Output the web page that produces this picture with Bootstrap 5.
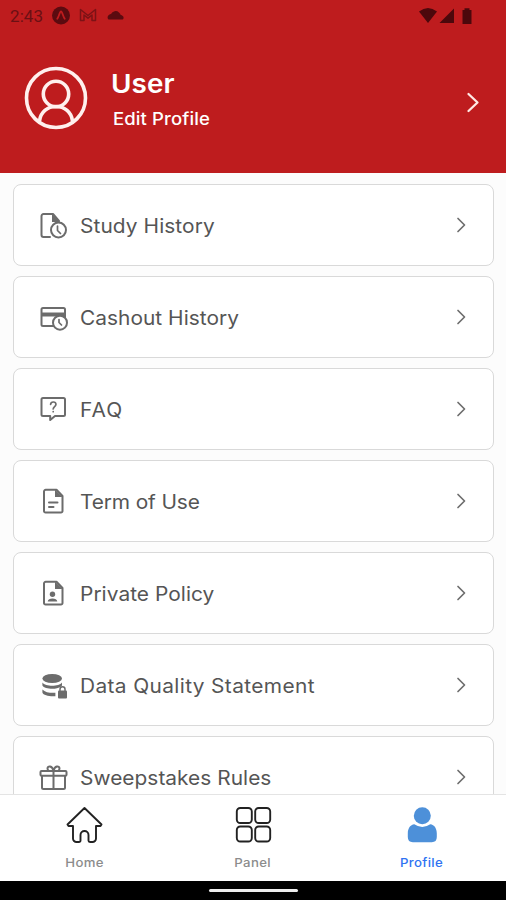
<!DOCTYPE html>
<html lang="en">
<head>
<meta charset="utf-8">
<meta name="viewport" content="width=device-width, initial-scale=1">
<title>Profile</title>
<link href="https://cdn.jsdelivr.net/npm/bootstrap@5.3.0/dist/css/bootstrap.min.css" rel="stylesheet">
<style>
body{font-family:Inter,"Open Sans",sans-serif;background:#fcfcfc;height:900px;color:#555}
svg{display:block;flex:none;fill:none;stroke-linecap:round;stroke-linejoin:round}
.hero{background:#be1c1e;height:173px}
.status{height:32px;padding:0 33px 0 10px;color:#6b1014}
.clock{font:400 17px/32px Roboto,sans-serif;width:34px;letter-spacing:.1px}
.user-row{padding:34px 26px 0 24px;height:130px}
.user-name{font-size:26px;line-height:32px;font-weight:600;letter-spacing:.1px;margin:2px 0 0 -1px;transform:scaleX(1.07);transform-origin:left}
.user-edit{font-size:17px;line-height:22px;font-weight:500;margin:8px 0 0 1px;letter-spacing:.1px;transform:scaleX(1.09);transform-origin:left}
.menu-list{padding:11px 12px 0 13px;gap:10px}
.menu-row{height:82px;flex:none;border:1.5px solid #d9d9d9;border-radius:8px;padding:0 25.5px 0 23.5px;font-size:19.5px;color:#555}
.menu-row svg{stroke:#6c6c6c;stroke-width:2}
.menu-row .solid{fill:#6c6c6c;stroke:none}
.menu-row .face{fill:#fff}
.menu-text{margin:3px 0 0 12px;white-space:nowrap;transform:scaleX(1.07);transform-origin:left}
.menu-row .arrow{stroke:#6e6e6e;stroke-width:1.7}
.tabs{height:87px;border-top:1.5px solid #e4e4e4;flex:none}
.tab-item{font-size:12px;font-weight:500;line-height:16px;color:#8c8c8c;padding-top:10px;letter-spacing:.3px}
.tab-item span{transform:scaleX(1.1)}
.tab-item svg{margin-bottom:12px;stroke:#222;stroke-width:1.9}
.tab-item.active{color:#2f73f2}
.home-bar{height:19px;flex:none}
.pill{width:89px;height:3.5px;background:#eee}
.t1{letter-spacing:.08px}.t2{letter-spacing:.03px}.t3{letter-spacing:1px}.t4{letter-spacing:-.12px}.t5{letter-spacing:.05px}.t6{letter-spacing:.35px}.t7{letter-spacing:.03px}
</style>
</head>
<body class="d-flex flex-column overflow-hidden">
<header class="hero flex-shrink-0 text-white">
  <div class="status d-flex align-items-center">
    <span class="clock">2:43</span>
    <svg class="ms-2" width="76" height="22" viewBox="51 5 76 22">
      <circle cx="60" cy="15.500" r="9" fill="#5b0b10"/><path d="M56.300 18.700c1.700-2 2.300-7.200 3.700-7.200s2 5.200 3.700 7.200" stroke="#be1c1e" stroke-width="1.800"/>
      <path d="M79.500 20.500V9.500l7.500 6 7.500-6v11h-3.500v-5.500l-4 3.200-4-3.200v5.500z" stroke="#7c1216" stroke-width="1.500"/>
      <path d="M107.500 19.500a3 3 0 0 1 .3-4.600c.8-.6 1.600-.8 2.200-.9a5 5 0 0 1 8-1.500c1 .8 1.500 1.800 1.700 2.500 3.500.6 3.500 4 1.800 4.500z" fill="#5b0b10"/>
    </svg>
    <svg class="ms-auto" width="54" height="20" viewBox="419 5 54 20">
      <g fill="#4c080c"><path d="M419 10.500q9-7 18 0L428 22z"/><path d="M454 7.500V22h-14.500z"/><path d="M462.500 9h2V7.300h5V9h2v14h-9z"/></g>
    </svg>
  </div>
  <div class="user-row d-flex">
    <svg width="64" height="64" viewBox="0 0 64 64" stroke="#fff0ee" stroke-width="3.600"><circle cx="32" cy="32" r="29.500"/><circle cx="32" cy="28" r="12.700"/><path d="M15.500 55c1-9 8-14.500 16.500-14.500S47.500 46 48.500 55"/></svg>
    <div class="ms-4">
      <div class="user-name">User</div>
      <div class="user-edit">Edit Profile</div>
    </div>
    <svg class="ms-auto mt-4" width="14" height="24" viewBox="0 0 14 24" stroke="#ffe9e5" stroke-width="2.300"><path d="M2.500 4 11.500 12.500 2.500 21"/></svg>
  </div>
</header>

<main class="menu-list d-flex flex-column flex-grow-1 overflow-hidden">
  <div class="menu-row bg-white d-flex align-items-center">
    <svg width="30" height="30"><path d="M12 27H5.500a2 2 0 0 1-2-2V6a2 2 0 0 1 2-2H15l6 7"/><path class="solid" d="M14 4v8h8z"/><circle class="face" cx="20.500" cy="20" r="7.500"/><path d="M19.500 16v4.500l3 3" stroke-width="1.700"/></svg>
    <span class="menu-text t1">Study History</span>
    <svg class="arrow ms-auto" width="14" height="20"><path d="M4 3.500 10.500 10 4 16.500"/></svg>
  </div>
  <div class="menu-row bg-white d-flex align-items-center">
    <svg width="30" height="30"><rect x="3.500" y="6" width="23.500" height="18" rx="1.500"/><path class="solid" d="M3.500 10.500H27v4H3.500z"/><circle class="face" cx="22" cy="20.700" r="7"/><path d="M21 17.500v3l2.500 2.500" stroke-width="1.700"/></svg>
    <span class="menu-text t2">Cashout History</span>
    <svg class="arrow ms-auto" width="14" height="20"><path d="M4 3.500 10.500 10 4 16.500"/></svg>
  </div>
  <div class="menu-row bg-white d-flex align-items-center">
    <svg width="30" height="30"><path d="M5 4h20.500a1.500 1.500 0 0 1 1.500 1.500v15a1.500 1.500 0 0 1-1.500 1.500H17l-4.800 4V22H5a1.500 1.500 0 0 1-1.500-1.500v-15A1.500 1.500 0 0 1 5 4z"/><path d="M12.600 10.300c.3-3.200 5.700-3 5.300.3-.3 2-2.600 2.100-2.700 4.400m0 2.600v.1" stroke-width="1.700"/></svg>
    <span class="menu-text t3">FAQ</span>
    <svg class="arrow ms-auto" width="14" height="20"><path d="M4 3.500 10.500 10 4 16.500"/></svg>
  </div>
  <div class="menu-row bg-white d-flex align-items-center">
    <svg width="30" height="30"><path d="M8 3.800h10.500l6 6.200v15a1.500 1.500 0 0 1-1.500 1.500H7.500A1.500 1.500 0 0 1 6 25V5.500a1.700 1.700 0 0 1 2-1.700zM11 16.500h8.500M11 21h4.500"/><path class="solid" d="M17 3.500v7.500h7.500z"/></svg>
    <span class="menu-text t4">Term of Use</span>
    <svg class="arrow ms-auto" width="14" height="20"><path d="M4 3.500 10.500 10 4 16.500"/></svg>
  </div>
  <div class="menu-row bg-white d-flex align-items-center">
    <svg width="30" height="30"><path d="M8 3.800h10.500l6 6.200v15a1.500 1.500 0 0 1-1.500 1.500H7.500A1.500 1.500 0 0 1 6 25V5.500a1.700 1.700 0 0 1 2-1.700z"/><path class="solid" d="M17 3.500v7.500h7.500zM9.700 23.500c0-4 9.600-4 9.600 0z"/><circle class="solid" cx="14.500" cy="16.200" r="2.700"/></svg>
    <span class="menu-text t5">Private Policy</span>
    <svg class="arrow ms-auto" width="14" height="20"><path d="M4 3.500 10.500 10 4 16.500"/></svg>
  </div>
  <div class="menu-row bg-white d-flex align-items-center">
    <svg width="30" height="30"><ellipse class="solid" cx="14.200" cy="8.500" rx="9.800" ry="4.500"/><path class="solid" d="M4.400 12.500c3 4.300 16.600 4.300 19.600 0v3c-1 1.300-3 2.300-5 2.800-5 1.200-13 .3-14.600-2.800zM4.400 19.500c2.600 3 8 3.600 13 3.300v3.400c-6 .4-12-.7-13-3.700z"/><rect class="solid" x="20" y="20.500" width="9" height="8" rx="1"/><path d="M22 20.500v-1.300a2.500 2.500 0 0 1 5 0v1.300" stroke-width="1.500"/></svg>
    <span class="menu-text t6">Data Quality Statement</span>
    <svg class="arrow ms-auto" width="14" height="20"><path d="M4 3.500 10.500 10 4 16.500"/></svg>
  </div>
  <div class="menu-row bg-white d-flex align-items-center">
    <svg width="30" height="30"><rect x="2.500" y="9" width="26" height="4.800" rx="1"/><path d="M4 14v11.500a1.500 1.500 0 0 0 1.500 1.500h20a1.500 1.500 0 0 0 1.500-1.500V14M15.500 9v18M15.500 9c-1-5.500-6-5.500-6-2.500 0 1 .6 2 1.500 2.500M15.500 9c1-5.500 6-5.500 6-2.500 0 1-.6 2-1.500 2.500"/></svg>
    <span class="menu-text t7">Sweepstakes Rules</span>
    <svg class="arrow ms-auto" width="14" height="20"><path d="M4 3.500 10.500 10 4 16.500"/></svg>
  </div>
</main>

<nav class="tabs bg-white row g-0 text-center">
  <div class="tab-item col d-flex flex-column align-items-center">
    <svg width="38" height="38"><path d="M19.500 3 2.500 19.500 3.500 21H8v12.500a3.500 3.500 0 0 0 3.500 3.500H14a1.500 1.500 0 0 0 1.500-1.500V30a4 4 0 0 1 8 0v5.500A1.500 1.500 0 0 0 25 37h2.500a3.500 3.500 0 0 0 3.500-3.500V21h4.500l1-1.500z"/></svg>
    <span>Home</span>
  </div>
  <div class="tab-item col d-flex flex-column align-items-center">
    <svg width="38" height="38"><rect x="2.800" y="3" width="15" height="15" rx="3.500"/><rect x="21.200" y="3" width="15" height="15" rx="3.500"/><rect x="2.800" y="21.500" width="15" height="15" rx="3.500"/><rect x="21.200" y="21.500" width="15" height="15" rx="3.500"/></svg>
    <span>Panel</span>
  </div>
  <div class="tab-item active col d-flex flex-column align-items-center">
    <svg width="38" height="38"><g fill="#4d90d9" stroke="none"><circle cx="19.300" cy="10.700" r="8.500"/><path d="M11.300 19.300q8 5.400 16 0c4 .5 6.500 4 6.500 9.200v3.500q0 5.200-5 5.200h-19q-5 0-5-5.200v-3.500c0-5.200 2.500-8.700 6.500-9.200z"/></g></svg>
    <span>Profile</span>
  </div>
</nav>
<div class="home-bar bg-black d-flex justify-content-center align-items-center"><div class="pill rounded-pill"></div></div>
<script src="https://cdn.jsdelivr.net/npm/bootstrap@5.3.0/dist/js/bootstrap.bundle.min.js"></script>
</body>
</html>
